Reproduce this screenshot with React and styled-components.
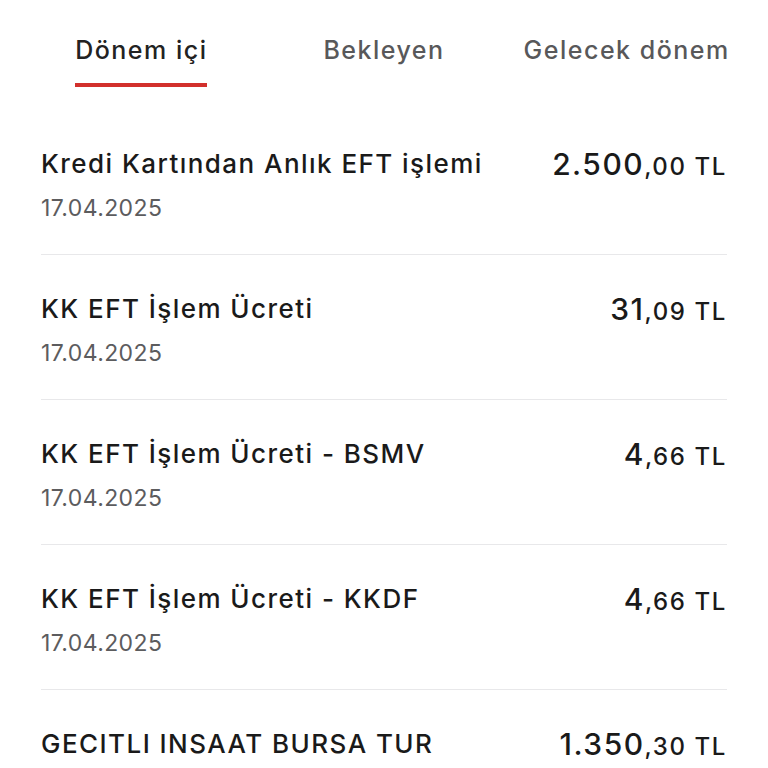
import React, { useState } from 'react';
import styled, { createGlobalStyle } from 'styled-components';

const GlobalStyle = createGlobalStyle`
  html, body {
    margin: 0;
    padding: 0;
    background: #ffffff;
    overflow: hidden;
  }
  body {
    font-family: Inter, "Noto Sans", sans-serif;
    color: #1d1d1f;
    -webkit-font-smoothing: antialiased;
  }
`;

const Page = styled.div`
  width: 768px;
  height: 768px;
  overflow: hidden;
`;

const Tabs = styled.nav`
  display: grid;
  grid-template-columns: repeat(3, 1fr);
  padding: 0 20px;
  height: 109px;
`;

const Tab = styled.button`
  display: flex;
  justify-content: center;
  align-items: flex-start;
  background: none;
  border: 0;
  padding: 33px 0 0;
  cursor: pointer;
  font-family: inherit;
`;

const TabLabel = styled.span`
  display: inline-block;
  font-size: 25px;
  line-height: 34px;
  font-weight: 500;
  letter-spacing: 1.5px;
  color: ${p => (p.$active ? '#222222' : '#58585a')};
  padding-bottom: 16px;
  border-bottom: 4px solid ${p => (p.$active ? '#d2302c' : 'transparent')};
`;

const List = styled.ul`
  list-style: none;
  margin: 0;
  padding: 0 41px;
`;

const Row = styled.li`
  display: flex;
  justify-content: space-between;
  align-items: flex-start;
  padding: 36.5px 0 31.5px;
  border-top: 1px solid ${p => (p.$first ? 'transparent' : '#e8e8ea')};
`;

const Info = styled.div`
  display: flex;
  flex-direction: column;
`;

const Title = styled.div`
  font-size: 26px;
  line-height: 34px;
  font-weight: 500;
  letter-spacing: 1.45px;
  color: #1a1a1a;
`;

const Date = styled.div`
  margin-top: 12px;
  font-size: 23px;
  line-height: 30px;
  font-weight: 400;
  letter-spacing: 0.4px;
  color: #5c5c5e;
`;

const Amount = styled.div`
  font-size: 30px;
  line-height: 34px;
  font-weight: 500;
  letter-spacing: 1.5px;
  color: #1a1a1a;
  white-space: nowrap;
`;

const Minor = styled.span`
  font-size: 24px;
  letter-spacing: 1.6px;
`;

const transactions = [
  { title: 'Kredi Kartından Anlık EFT işlemi', date: '17.04.2025', major: '2.500', minor: ',00 TL' },
  { title: 'KK EFT İşlem Ücreti', date: '17.04.2025', major: '31', minor: ',09 TL' },
  { title: 'KK EFT İşlem Ücreti - BSMV', date: '17.04.2025', major: '4', minor: ',66 TL' },
  { title: 'KK EFT İşlem Ücreti - KKDF', date: '17.04.2025', major: '4', minor: ',66 TL' },
  { title: 'GECITLI INSAAT BURSA TUR', date: '17.04.2025', major: '1.350', minor: ',30 TL' },
];

const tabs = ['Dönem içi', 'Bekleyen', 'Gelecek dönem'];

export default function App() {
  const [active, setActive] = useState(0);
  return (
    <Page>
      <GlobalStyle />
      <Tabs>
        {tabs.map((t, i) => (
          <Tab key={t} onClick={() => setActive(i)}>
            <TabLabel $active={i === active}>{t}</TabLabel>
          </Tab>
        ))}
      </Tabs>
      <List>
        {transactions.map((tx, i) => (
          <Row key={i} $first={i === 0}>
            <Info>
              <Title>{tx.title}</Title>
              <Date>{tx.date}</Date>
            </Info>
            <Amount>
              {tx.major}
              <Minor>{tx.minor}</Minor>
            </Amount>
          </Row>
        ))}
      </List>
    </Page>
  );
}
